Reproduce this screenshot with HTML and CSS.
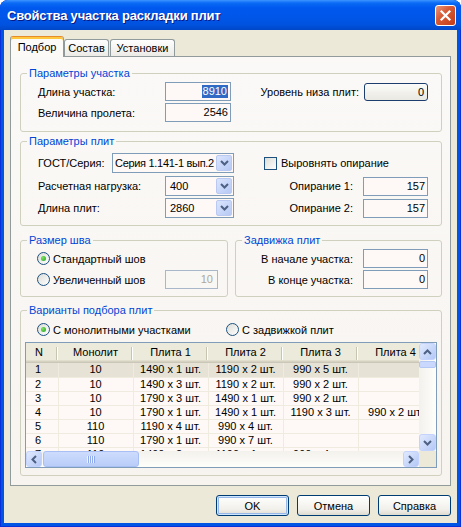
FILE: index.html
```html
<!DOCTYPE html>
<html lang="ru">
<head>
  <meta charset="UTF-8">
  <title>Свойства участка раскладки плит</title>
  <link rel="stylesheet" href="styles.css">
</head>
<body>
<div class="window">
  <div class="titlebar">
    <span class="title">Свойства участка раскладки плит</span>
    <div class="close-btn">
      <svg width="11" height="11" viewBox="0 0 11 11"><path d="M1.5 1.5 L9.5 9.5 M9.5 1.5 L1.5 9.5" stroke="#fff" stroke-width="2.2" stroke-linecap="square"/></svg>
    </div>
  </div>

  <div class="client">
    <div class="tabs">
      <div class="tab active">Подбор</div>
      <div class="tab t-sostav">Состав</div>
      <div class="tab t-ust">Установки</div>
    </div>

    <div class="panel">
      <!-- Параметры участка -->
      <fieldset class="group g-site">
        <legend>Параметры участка</legend>
        <div class="group-body">
          <div class="row">
            <span class="lbl w127">Длина участка:</span>
            <span class="edit w66"><span class="sel">8910</span></span>
            <span class="rlbl r5">Уровень низа плит:</span>
            <span class="edit level">0</span>
          </div>
          <div class="row">
            <span class="lbl w127">Величина пролета:</span>
            <span class="edit w66">2546</span>
          </div>
        </div>
      </fieldset>

      <!-- Параметры плит -->
      <fieldset class="group g-plates">
        <legend>Параметры плит</legend>
        <div class="group-body">
          <div class="row row20">
            <span class="lbl w74">ГОСТ/Серия:</span>
            <div class="combo w122">
              <span class="combo-text narrow">Серия 1.141-1 вып.2</span>
              <span class="drop"><svg width="9" height="6" viewBox="0 0 9 6"><path d="M1 1 L4.5 4.5 L8 1" fill="none" stroke="#4D6185" stroke-width="2"/></svg></span>
            </div>
            <span class="check"></span>
            <span class="check-text">Выровнять опирание</span>
          </div>
          <div class="row row20 mt3">
            <span class="lbl w127">Расчетная нагрузка:</span>
            <div class="combo w69">
              <span class="combo-text">400</span>
              <span class="drop"><svg width="9" height="6" viewBox="0 0 9 6"><path d="M1 1 L4.5 4.5 L8 1" fill="none" stroke="#4D6185" stroke-width="2"/></svg></span>
            </div>
            <span class="rlbl r10">Опирание 1:</span>
            <span class="edit w65">157</span>
          </div>
          <div class="row row20 mt2">
            <span class="lbl w127">Длина плит:</span>
            <div class="combo w69">
              <span class="combo-text">2860</span>
              <span class="drop"><svg width="9" height="6" viewBox="0 0 9 6"><path d="M1 1 L4.5 4.5 L8 1" fill="none" stroke="#4D6185" stroke-width="2"/></svg></span>
            </div>
            <span class="rlbl r10">Опирание 2:</span>
            <span class="edit w65">157</span>
          </div>
        </div>
      </fieldset>

      <div class="group-row">
        <!-- Размер шва -->
        <fieldset class="group g-seam">
          <legend>Размер шва</legend>
          <div class="group-body">
            <div class="row row21">
              <span class="radio on"><span class="dot"></span></span>
              <span>Стандартный шов</span>
            </div>
            <div class="row row21">
              <span class="radio"></span>
              <span>Увеличенный шов</span>
              <span class="edit w53 disabled">10</span>
            </div>
          </div>
        </fieldset>

        <!-- Задвижка плит -->
        <fieldset class="group g-shift">
          <legend>Задвижка плит</legend>
          <div class="group-body">
            <div class="row row21">
              <span class="rlbl r10">В начале участка:</span>
              <span class="edit w65">0</span>
            </div>
            <div class="row row21">
              <span class="rlbl r10">В конце участка:</span>
              <span class="edit w65">0</span>
            </div>
          </div>
        </fieldset>
      </div>

      <!-- Варианты подбора плит -->
      <fieldset class="group g-variants">
        <legend>Варианты подбора плит</legend>
        <div class="group-body">
          <div class="row row21 radios">
            <span class="opt">
              <span class="radio on"><span class="dot"></span></span>
              <span>С монолитными участками</span>
            </span>
            <span class="opt">
              <span class="radio"></span>
              <span>С задвижкой плит</span>
            </span>
          </div>

          <div class="listview">
            <div class="lv-view">
              <table class="grid">
                <colgroup>
                  <col class="c-n"><col class="c-w"><col class="c-w"><col class="c-w"><col class="c-w"><col class="c-w">
                </colgroup>
                <thead>
                  <tr><th class="left">N</th><th>Монолит</th><th>Плита 1</th><th>Плита 2</th><th>Плита 3</th><th>Плита 4</th></tr>
                </thead>
                <tbody>
                  <tr class="selected"><td class="left">1</td><td>10</td><td>1490 x 1 шт.</td><td>1190 x 2 шт.</td><td>990 x 5 шт.</td><td></td></tr>
                  <tr><td class="left">2</td><td>10</td><td>1490 x 3 шт.</td><td>1190 x 2 шт.</td><td>990 x 2 шт.</td><td></td></tr>
                  <tr><td class="left">3</td><td>10</td><td>1790 x 3 шт.</td><td>1490 x 1 шт.</td><td>990 x 2 шт.</td><td></td></tr>
                  <tr><td class="left">4</td><td>10</td><td>1790 x 1 шт.</td><td>1490 x 1 шт.</td><td>1190 x 3 шт.</td><td>990 x 2 шт.</td></tr>
                  <tr><td class="left">5</td><td>110</td><td>1190 x 4 шт.</td><td>990 x 4 шт.</td><td></td><td></td></tr>
                  <tr><td class="left">6</td><td>110</td><td>1790 x 1 шт.</td><td>990 x 7 шт.</td><td></td><td></td></tr>
                  <tr><td class="left">7</td><td>110</td><td>1490 x 2 шт.</td><td>1190 x 1 шт.</td><td>990 x 4 шт.</td><td></td></tr>
                </tbody>
              </table>
            </div>
            <div class="vscroll">
              <span class="sb-btn"><svg width="9" height="6" viewBox="0 0 9 6"><path d="M1 5 L4.5 1.5 L8 5" fill="none" stroke="#4D6185" stroke-width="2"/></svg></span>
              <span class="sb-thumb-v"></span>
              <span class="sb-track"></span>
              <span class="sb-btn"><svg width="9" height="6" viewBox="0 0 9 6"><path d="M1 1 L4.5 4.5 L8 1" fill="none" stroke="#4D6185" stroke-width="2"/></svg></span>
            </div>
            <div class="hscroll">
              <span class="sb-btn"><svg width="6" height="9" viewBox="0 0 6 9"><path d="M5 1 L1.5 4.5 L5 8" fill="none" stroke="#4D6185" stroke-width="2"/></svg></span>
              <span class="sb-thumb-h"><span class="grip"></span></span>
              <span class="sb-track"></span>
              <span class="sb-btn"><svg width="6" height="9" viewBox="0 0 6 9"><path d="M1 1 L4.5 4.5 L1 8" fill="none" stroke="#4D6185" stroke-width="2"/></svg></span>
            </div>
            <div class="corner"></div>
          </div>
        </div>
      </fieldset>
    </div>

    <div class="buttons">
      <button class="btn default">OK</button>
      <button class="btn">Отмена</button>
      <button class="btn">Справка</button>
    </div>
  </div>
</div>
</body>
</html>
```

FILE: styles.css
```css
* {
  box-sizing: border-box;
}
body {
  margin: 0;
  font-family: "Liberation Sans", Arial, sans-serif;
  font-size: 11px;
  color: #000;
  background: #fff;
}

/* window frame */
.window {
  width: 461px;
  height: 527px;
  display: flex;
  flex-direction: column;
  background: #0055e5;
  border-radius: 8px 8px 0 0;
  box-shadow: inset 0 0 0 1px #0831d9;
  overflow: hidden;
}
.titlebar {
  height: 30px;
  flex: none;
  display: flex;
  align-items: center;
  justify-content: space-between;
  padding: 0 5px 0 7px;
  background: linear-gradient(to bottom, #3d95ff 0, #0a6af5 3px, #0058ee 8px, #0056e8 18px, #0052de 25px, #0047c8 30px);
}
.title {
  color: #fff;
  font-weight: bold;
  font-size: 13px;
  letter-spacing: -0.2px;
  text-shadow: 1px 1px #0a1883;
}
.close-btn {
  width: 21px;
  height: 21px;
  margin-top: 1px;
  border: 1px solid #fff;
  border-radius: 3px;
  background: linear-gradient(135deg, #e9977d 0%, #d85b37 40%, #c43b17 100%);
  display: flex;
  align-items: center;
  justify-content: center;
}

.client {
  flex: 1;
  margin: 0 4px 4px;
  background: #ece9d8;
  padding: 6px 6px 0;
  display: flex;
  flex-direction: column;
}

/* tabs */
.tabs {
  display: flex;
  align-items: flex-end;
  height: 21px;
  margin-bottom: -1px;
  position: relative;
  z-index: 1;
}
.tab {
  height: 17px;
  margin-bottom: 1px;
  border: 1px solid #919b9c;
  border-bottom: none;
  border-radius: 3px 3px 0 0;
  background: linear-gradient(to bottom, #fefefe, #ecebe6);
  text-align: center;
  line-height: 16px;
}
.tab.active {
  width: 54px;
  height: 21px;
  margin-bottom: 0;
  border-top: 1px solid #e68b2c;
  box-shadow: inset 0 2px #ffc83c;
  background: #fbfaf7;
  line-height: 19px;
  padding-top: 1px;
}
.t-sostav {
  width: 45px;
}
.t-ust {
  width: 65px;
  margin-left: 1px;
}

.panel {
  height: 430px;
  border: 1px solid #919b9c;
  background: linear-gradient(to bottom, #fbf9f7, #f7f4f0);
  padding: 10px 8px 0 9px;
}

/* group boxes */
.group {
  margin: 0;
  padding: 0;
  border: 1px solid #d0d0bf;
  border-radius: 3px;
  min-width: 0;
}
.group legend {
  margin-left: 6px;
  padding: 0 2px;
  color: #0046d5;
  line-height: 13px;
}
.g-site {
  height: 65px;
}
.g-site .group-body {
  padding: 2px 13px 0 17px;
}
.g-plates {
  height: 91px;
  margin-top: 3px;
}
.g-plates .group-body {
  padding: 5px 13px 0 17px;
}
.group-row {
  display: flex;
  gap: 7px;
  margin-top: 8px;
}
.g-seam {
  width: 208px;
  height: 63px;
}
.g-seam .group-body {
  padding: 1px 9px 0 16px;
}
.g-shift {
  width: 207px;
  height: 63px;
}
.g-shift .group-body {
  padding: 1px 13px 0 0;
}
.g-variants {
  height: 172px;
  margin-top: 7px;
}
.g-variants .group-body {
  padding: 2px 4px 0 4px;
}

.row {
  display: flex;
  align-items: center;
  height: 19px;
}
.row + .row {
  margin-top: 2px;
}
.row20 {
  height: 20px;
}
.row21 {
  height: 21px;
}
.row21 + .row21 {
  margin-top: 0;
}
.row.mt3 {
  margin-top: 3px;
}
.row.mt2 {
  margin-top: 2px;
}

.lbl {
  flex: none;
}
.w74 { width: 74px; }
.w127 { width: 127px; }
.rlbl {
  flex: 1;
  text-align: right;
}
.r5 { padding-right: 5px; }
.r10 { padding-right: 10px; }

/* edits */
.edit {
  display: block;
  flex: none;
  height: 19px;
  border: 1px solid #7f9db9;
  background: #fef8f7;
  text-align: right;
  padding: 0 2px;
  line-height: 17px;
}
.w53 { width: 53px; }
.w65 { width: 65px; }
.w66 { width: 66px; }
.w69 { width: 69px; }
.w122 { width: 122px; }
.sel {
  background: #316ac5;
  color: #fff;
  padding: 0 1px;
  display: inline-block;
  line-height: 13px;
}
.edit.level {
  width: 64px;
  height: 18px;
  border: 1px solid #1c3d6e;
  border-radius: 3px;
  background: linear-gradient(to bottom, #fbfbf9, #e9e8e1);
  line-height: 16px;
  padding-right: 3px;
}
.edit.disabled {
  margin-left: auto;
  color: #aca899;
  background: #f9f7f3;
  border-color: #a8b7c9;
  padding-right: 4px;
}

/* combos */
.combo {
  flex: none;
  height: 20px;
  border: 1px solid #7f9db9;
  background: #fef8f7;
  display: flex;
  align-items: center;
  padding: 1px;
}
.combo-text {
  flex: 1;
  white-space: nowrap;
  overflow: hidden;
  padding-left: 3px;
}
.combo-text.narrow {
  padding-left: 1px;
  letter-spacing: -0.3px;
}
.drop {
  flex: none;
  width: 16px;
  height: 16px;
  border: 1px solid #b9c9f1;
  border-radius: 2px;
  background: linear-gradient(135deg, #dbe5fd, #b6c9f5);
  display: flex;
  align-items: center;
  justify-content: center;
}

/* check and radio */
.check {
  width: 13px;
  height: 13px;
  margin-left: 30px;
  margin-right: 4px;
  border: 1px solid #1c5180;
  background: linear-gradient(135deg, #dcdcd7, #fff);
}
.radio {
  flex: none;
  width: 13px;
  height: 13px;
  margin-right: 3px;
  border: 1px solid #1c5180;
  border-radius: 50%;
  background: linear-gradient(135deg, #dcdcd7, #fff);
  display: flex;
  align-items: center;
  justify-content: center;
}
.dot {
  width: 5px;
  height: 5px;
  border-radius: 50%;
  background: radial-gradient(circle at 35% 35%, #7be35f, #21a121);
}
.radios {
  padding-left: 12px;
}
.opt {
  display: flex;
  align-items: center;
}
.opt:first-child {
  width: 189px;
}

/* list view */
.listview {
  margin-top: 2px;
  width: 412px;
  height: 126px;
  border: 1px solid #7f9db9;
  display: grid;
  grid-template-columns: 393px 17px;
  grid-template-rows: 108px 16px;
  background: #fef8f7;
}
.lv-view {
  overflow: hidden;
}
.grid {
  table-layout: fixed;
  width: 407px;
  border-collapse: collapse;
  font-size: 11px;
}
.c-n { width: 32px; }
.c-w { width: 75px; }
.grid th {
  height: 20px;
  padding: 0 0 3px;
  font-weight: normal;
  white-space: nowrap;
  overflow: hidden;
  background:
    linear-gradient(#c7c5b2, #c7c5b2) right 1px top 4px / 1px 13px no-repeat,
    linear-gradient(#fff, #fff) right 0 top 4px / 1px 13px no-repeat,
    #ebeadb;
  box-shadow: inset 0 -1px #cbc7b8, inset 0 -2px #d6d2c2, inset 0 -3px #e2decd;
}
.grid td {
  height: 14px;
  padding: 0;
  line-height: 13px;
  text-align: center;
  white-space: nowrap;
  overflow: hidden;
  border-right: 1px solid #efecdf;
  border-bottom: 1px solid #efecdf;
}
.grid .left {
  text-align: left;
  padding-left: 9px;
}
.grid tr.selected td {
  background: #e6e3d6;
}

.vscroll {
  display: flex;
  flex-direction: column;
  background: linear-gradient(to right, #f3f1ec, #fefefb);
}
.hscroll {
  display: flex;
  background: linear-gradient(to bottom, #f3f1ec, #fefefb);
}
.sb-btn {
  flex: none;
  width: 17px;
  height: 17px;
  border: 1px solid #c3d3fd;
  border-radius: 3px;
  background: linear-gradient(135deg, #e1eafe, #b4c8f6);
  display: flex;
  align-items: center;
  justify-content: center;
}
.hscroll .sb-btn {
  width: 16px;
  height: 16px;
}
.sb-track {
  flex: 1;
}
.sb-thumb-v {
  height: 7px;
  margin: 1px 0;
  border: 1px solid #b4c8f6;
  border-radius: 2px;
  background: #c9d8fc;
}
.sb-thumb-h {
  width: 96px;
  margin: 0 1px;
  border: 1px solid #a8bff5;
  border-radius: 3px;
  background: linear-gradient(to bottom, #cddcfd, #b9cdf8);
  display: flex;
  align-items: center;
  justify-content: center;
}
.grip {
  width: 8px;
  height: 7px;
  background: repeating-linear-gradient(to right, #eef3fe 0 1px, #8faaed 1px 2px);
}
.corner {
  background: #ece9d8;
}

/* buttons */
.buttons {
  display: flex;
  justify-content: flex-end;
  gap: 8px;
  margin-top: 9px;
}
.btn {
  width: 73px;
  height: 21px;
  font-family: "Liberation Sans", Arial, sans-serif;
  font-size: 11px;
  color: #000;
  border: 1px solid #003c74;
  border-radius: 3px;
  background: linear-gradient(to bottom, #fff, #f1f0ea 70%, #dedcd0);
  padding: 0;
}
.btn.default {
  box-shadow: inset 0 0 0 1px #cee7ff, inset 0 0 0 2px #98b8ea;
}
```
